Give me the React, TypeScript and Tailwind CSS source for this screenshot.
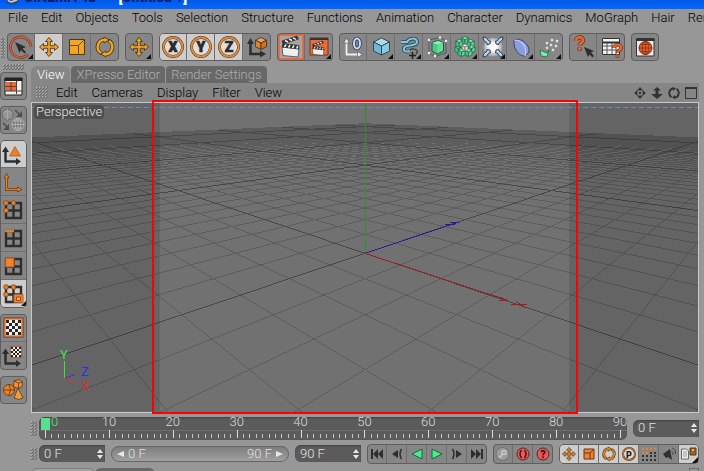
import React from "react";
import type { ReactNode } from "react";

const ORANGE = "#f4a324";
const DEEP = "#e8802a";
const DARK = "#2e2e2e";

/* ---------- shared pieces ---------- */

function Svg({ children, size = 28 }: { children: ReactNode; size?: number }) {
  return (
    <svg width={size} height={size} viewBox={`0 0 ${size} ${size}`} className="block shrink-0" aria-hidden="true">
      {children}
    </svg>
  );
}

const Corner = () => <path d="M26 21v5h-5z" fill="#111" />;

function Grip({ className }: { className: string }) {
  return (
    <div
      className={`shrink-0 bg-[linear-gradient(135deg,#b4b4b4_33%,#6a6a6a_34%,#6a6a6a_66%,#8e8e8e_67%)] bg-[length:3px_3px] ${className}`}
    />
  );
}

function MoveShape({ s = 1, fill = ORANGE }: { s?: number; fill?: string }) {
  return (
    <g transform={`scale(${s})`}>
      <path
        d="M0-9.5 3.5-5.500H1.300V-1.300H5.500V-3.500L9.500 0 5.500 3.500V1.300H1.300V5.500H3.500L0 9.500-3.500 5.500H-1.300V1.300H-5.500V3.500L-9.500 0-5.500-3.500V-1.300H-1.300V-5.500H-3.500Z"
        fill={fill}
        stroke="#4a3818"
        strokeWidth="0.9"
      />
    </g>
  );
}

type Shades = [string, string, string];

function Cube({ x, y, r, c, edge = DARK }: { x: number; y: number; r: number; c: Shades; edge?: string }) {
  const h = r / 2;
  return (
    <g transform={`translate(${x} ${y})`} stroke={edge} strokeWidth="0.8" strokeLinejoin="round">
      <path d={`M0 ${-r}L${r} ${-h}L0 0L${-r} ${-h}Z`} fill={c[0]} />
      <path d={`M${-r} ${-h}L0 0V${r + 1}L${-r} ${h + 1}Z`} fill={c[1]} />
      <path d={`M${r} ${-h}L0 0V${r + 1}L${r} ${h + 1}Z`} fill={c[2]} />
    </g>
  );
}

function Letter({ ch }: { ch: string }) {
  return (
    <Svg>
      <circle cx="14" cy="14" r="9.500" fill="#dedede" stroke="#4a3420" strokeWidth="2.800" />
      <circle cx="14" cy="14" r="9.500" fill="none" stroke="#e08a3c" strokeWidth="2" />
      <text x="14" y="19" textAnchor="middle" fontSize="14" fontWeight="900" fill="#2a2a2a" stroke="#2a2a2a" strokeWidth="0.700" fontFamily="Roboto, sans-serif">
        {ch}
      </text>
    </Svg>
  );
}

function RotateShape({ fill = ORANGE }: { fill?: string }) {
  return (
    <g fill="none">
      <g stroke="#4a3818" strokeWidth="4">
        <path d="M-3.500 6.500A7.300 7.300 0 0 1 0-7.300" />
        <path d="M3.500-6.500A7.300 7.300 0 0 1 0 7.300" />
      </g>
      <path d="M-1-10 4-7-1-4ZM1 10-4 7 1 4Z" fill={fill} stroke="#4a3818" strokeWidth="0.900" />
      <g stroke={fill} strokeWidth="2.400">
        <path d="M-4 6.100A7.300 7.300 0 0 1 0-7.300" />
        <path d="M4-6.100A7.300 7.300 0 0 1 0 7.300" />
      </g>
    </g>
  );
}

function Checker({ x, y, s, n = 5 }: { x: number; y: number; s: number; n?: number }) {
  const cells: ReactNode[] = [];
  for (let r = 0; r < n; r++)
    for (let c = 0; c < n; c++)
      cells.push(
        <rect key={`${r}-${c}`} x={x + c * s} y={y + r * s} width={s} height={s} fill={(r + c) % 2 ? "#f2f2f2" : "#262626"} />,
      );
  return <g shapeRendering="crispEdges">{cells}</g>;
}

const Clapper = () => (
  <g stroke="#333" strokeWidth="0.700">
    <path d="M5 14 22 16 21 24 6 22.500Z" fill="#f0f0f0" />
    <path d="M5 14 6 10.500 22 12.500 22 16Z" fill="#333" />
    <path d="M5 8 20 3 21.500 6 6 11Z" fill="#333" />
    <path d="M8 7.500l3 1.500M12 6l3 1.500M16 4.800l3 1.500M9 11.500l-1.500 2.500M13 12l-1.500 2.500M17 12.500l-1.500 2.500M21 13l-1.500 2.500" stroke="#eee" strokeWidth="1.500" />
  </g>
);

type Tool = { label: string; icon: ReactNode; on?: boolean };

function ToolGroup({ tools }: { tools: Tool[] }) {
  return (
    <div className="flex shrink-0 overflow-hidden rounded outline-1 -outline-offset-1 outline-[#5e5e5e]">
      {tools.map((t, i) => (
        <button
          key={t.label}
          type="button"
          aria-label={t.label}
          className={`flex h-7 w-7 ${t.on ? "bg-[#cdcdcd]" : "bg-[#868686]"} ${i < tools.length - 1 ? "border-r border-[#6e6e6e]" : ""}`}
        >
          {t.icon}
        </button>
      ))}
    </div>
  );
}

function SideGroup({ tools }: { tools: Tool[] }) {
  return (
    <div className="w-[27px] overflow-hidden rounded outline-1 -outline-offset-1 outline-[#5e5e5e]">
      {tools.map((t, i) => (
        <button
          key={t.label}
          type="button"
          aria-label={t.label}
          className={`flex h-7 w-full ${t.on ? "bg-[#cdcdcd]" : "bg-[#868686]"} ${i < tools.length - 1 ? "border-b border-[#6e6e6e]" : ""}`}
        >
          {t.icon}
        </button>
      ))}
    </div>
  );
}

/* ---------- main toolbar ---------- */

const ICE: Shades = ["#a8dcf0", "#6cb8dc", "#84cce8"];
const MINT: Shades = ["#86e8b0", "#48c486", "#5cd898"];
const AMBER: Shades = ["#f4a050", "#e8802a", "#d8701c"];

const toolbar: Tool[][] = [
  [
    {
      label: "Live Selection",
      icon: (
        <Svg>
          <path d="M21 21.500A10.300 10.300 0 1 1 24 14" fill="none" stroke="#5c3428" strokeWidth="2.600" />
          <path d="M21 21.500A10.300 10.300 0 1 1 24 14" fill="none" stroke="#d4603c" strokeWidth="1.600" />
          <path d="M8 9 19 14 15.500 15.500 19 19 17.500 20.500 14 17 12.500 20Z" fill={DARK} />
          <Corner />
        </Svg>
      ),
    },
    { label: "Move", on: true, icon: <Svg><g transform="translate(14 14)"><MoveShape /></g></Svg> },
    {
      label: "Scale",
      icon: (
        <Svg>
          <path d="M6.500 6.500h15v15h-15Z" fill={ORANGE} stroke="#4a3818" />
          <path d="M6.500 12.500h9v9M15.500 12.500l6-6" fill="none" stroke="#6a4a18" />
        </Svg>
      ),
    },
    { label: "Rotate", icon: <Svg><g transform="translate(14 14)"><RotateShape /></g></Svg> },
  ],
  [{ label: "Last Tool", icon: <Svg><g transform="translate(14 14)"><MoveShape /></g><Corner /></Svg> }],
  [
    { label: "Lock X", on: true, icon: <Letter ch="X" /> },
    { label: "Lock Y", on: true, icon: <Letter ch="Y" /> },
    { label: "Lock Z", on: true, icon: <Letter ch="Z" /> },
    {
      label: "Coordinate System",
      icon: (
        <Svg>
          <path d="M7.500 21V9M6 21H18" stroke={DARK} strokeWidth="2.500" />
          <path d="M7.500 5 11 11H4ZM23 21l-6-3.500v7Z" fill={DARK} />
          <Cube x={18} y={10} r={5.500} c={AMBER} />
        </Svg>
      ),
    },
  ],
  [
    {
      label: "Render View",
      icon: (
        <Svg>
          <path d="M2 2h24v24H2Z" fill="#a8a4a2" stroke="#f0622c" strokeWidth="1.500" />
          <Clapper />
        </Svg>
      ),
    },
    {
      label: "Render to Picture Viewer",
      icon: (
        <Svg>
          <path d="M5 5h18v17H5Z" fill="#ee6a34" stroke="#7a3418" />
          <path d="M5 6h18" stroke="#333" strokeWidth="2" />
          <g transform="translate(4 6) scale(.68)"><Clapper /></g>
          <Corner />
        </Svg>
      ),
    },
  ],
  [
    {
      label: "Null Object",
      icon: (
        <Svg>
          <path d="M7.500 21.500V8M7 21.500H20" stroke="#f0f0f0" strokeWidth="1.800" fill="none" />
          <path d="M7.500 5l3 5h-6ZM23.500 21.500l-5-3v6Z" fill="#f0f0f0" stroke="#444" strokeWidth="0.600" />
          <ellipse cx="18" cy="10.500" rx="3" ry="5" fill="none" stroke="#34405c" strokeWidth="3.600" />
          <ellipse cx="18" cy="10.500" rx="3" ry="5" fill="none" stroke="#c4dcf4" strokeWidth="2" />
        </Svg>
      ),
    },
    { label: "Cube", icon: <Svg><Cube x={14.500} y={13} r={8} c={ICE} /><Corner /></Svg> },
    {
      label: "Spline",
      icon: (
        <Svg>
          <path d="M10 18c4 2 5-3 9-2s4 3 2 5" fill="none" stroke="#2c343c" strokeWidth="1.200" />
          <path d="M6 9h6c2-4 10-5 10 0s-12 2-13 6 4 4 6 3" fill="none" stroke="#2c4450" strokeWidth="3.600" />
          <path d="M6 9h6c2-4 10-5 10 0s-12 2-13 6 4 4 6 3" fill="none" stroke="#7cc8e8" strokeWidth="2" />
          <path d="M14 22.500h7M17.500 19v7" stroke="#222" strokeWidth="1.600" />
          <Corner />
        </Svg>
      ),
    },
    {
      label: "HyperNURBS",
      icon: (
        <Svg>
          <path d="M6 7 17 4.500 23 8V20L12 23.500 6 20Z" fill="none" stroke="#555" strokeWidth="0.900" />
          <path d="M9 9.500 15 7.500 20.500 9.500V18L14 21 9 18Z" fill="#4cc888" stroke="#205c3c" strokeLinejoin="round" />
          <path d="M9.500 9.800 15 8 20 9.800 14.500 11.500Z" fill="#90f0b8" />
          <path d="M14.500 11.500 20 9.800V17.500L14.200 20.500Z" fill="#64dc9c" />
          <g fill="#f2f2f2"><circle cx="6" cy="7" r="1.200" /><circle cx="17" cy="4.500" r="1.200" /><circle cx="23" cy="8" r="1.200" /><circle cx="6" cy="20" r="1.200" /><circle cx="12" cy="23" r="1.200" /></g>
          <Corner />
        </Svg>
      ),
    },
    {
      label: "Array",
      icon: (
        <Svg>
          {[-90, -35, 20, 160, 215, 60, 120].map((a) => (
            <Cube key={a} x={14 + 7 * Math.cos((a * Math.PI) / 180)} y={13.500 + 6.500 * Math.sin((a * Math.PI) / 180)} r={3.500} c={MINT} edge="#286848" />
          ))}
          <Cube x={14} y={14} r={3} c={["#fff", "#ccc", "#e0e0e0"]} edge="#777" />
          <Corner />
        </Svg>
      ),
    },
    {
      label: "Deformer",
      icon: (
        <Svg>
          <circle cx="14" cy="14" r="9.500" fill="#a8a8a8" />
          <circle cx="14" cy="14" r="8" fill="#cacaca" />
          <circle cx="14" cy="14" r="6" fill="#ececec" />
          <circle cx="14" cy="14" r="4" fill="#fff" />
          {[0, 90, 180, 270].map((a) => (
            <path key={a} transform={`rotate(${a} 14 14)`} d="M4 4 7 4.500 10 8 11.500 8 11 11 8 11.500 8 10 4.500 7Z" fill="#b4d0ec" stroke="#2c3440" strokeWidth="0.900" />
          ))}
          <Corner />
        </Svg>
      ),
    },
    {
      label: "Bend",
      icon: (
        <Svg>
          <path d="M7 7C12 4 23 10 22 19L18 23C14 24 6 18 7 7Z" fill="#8c9ce0" stroke="#343c70" strokeWidth="0.900" />
          <path d="M7 7C14 7 21 13 18 23" fill="none" stroke="#c4ccfa" strokeWidth="1.200" />
          <Corner />
        </Svg>
      ),
    },
    {
      label: "Particles",
      icon: (
        <Svg>
          <path d="M5 17 12 20 14 17 12 24 6 23Z" fill="#84e8ac" stroke="#2c7850" />
          <g fill="#f4f4f4" stroke="#777" strokeWidth=".4">
            <circle cx="12" cy="10" r="1.500" /><circle cx="17" cy="7" r="1.500" /><circle cx="22" cy="8" r="1.500" /><circle cx="16" cy="12" r="1.500" /><circle cx="21" cy="13" r="1.500" /><circle cx="12" cy="15" r="1.400" /><circle cx="18" cy="17" r="1.400" />
          </g>
          <Corner />
        </Svg>
      ),
    },
  ],
  [
    {
      label: "Help",
      icon: (
        <Svg>
          <path d="M7 8C7 3 14 3 14 7.500 14 10 10.500 10 10.500 12.500M10.500 14.500v3" fill="none" stroke="#4a241a" strokeWidth="4" />
          <path d="M7 8C7 3 14 3 14 7.500 14 10 10.500 10 10.500 12.500M10.500 14.500v2.500" fill="none" stroke="#f0642c" strokeWidth="2.800" />
          <path d="M15 14 25 18 22 19.500 25 23 23.500 24.500 20.500 21.500 19 24Z" fill={DARK} />
        </Svg>
      ),
    },
    {
      label: "Table Help",
      icon: (
        <Svg>
          <path d="M5.500 5.500h17v16h-17Z" fill="#f2f2f2" stroke="#333" />
          <path d="M5 9.500h18" stroke="#333" strokeWidth="2" />
          <path d="M6 13h16M6 17h16M10 10v11M15 10v11M19 10v11" stroke="#555" />
          <path d="M17 15c0-4 7-4 7 0 0 2.500-3.500 2-3.500 5M20.500 21.500v3" fill="none" stroke="#4a241a" strokeWidth="3.600" />
          <path d="M17 15c0-4 7-4 7 0 0 2.500-3.500 2-3.500 5M20.500 21.500v2.500" fill="none" stroke="#f0642c" strokeWidth="2.400" />
        </Svg>
      ),
    },
  ],
  [
    {
      label: "Online",
      icon: (
        <Svg>
          <path d="M5.500 5.500h17.500v17.500H5.500Z" fill="#eee" stroke="#333" />
          <path d="M5 7h18.500" stroke="#333" strokeWidth="2" />
          <circle cx="14.500" cy="15" r="6.500" fill="#ea5a24" stroke="#74301a" />
          <path d="M8 15h13M14.500 8.500v13M9.500 11.500h10M9.500 18.500h10" stroke="#74301a" strokeWidth="0.700" />
          <ellipse cx="14.500" cy="15" rx="3.300" ry="6.500" fill="none" stroke="#74301a" strokeWidth="0.700" />
        </Svg>
      ),
    },
  ],
];

/* ---------- mode palette ---------- */

const Grid4 = () => <path d="M6 7h15v15H6Z M13.500 7v15M6 14.500h15" fill="none" stroke={DARK} strokeWidth="2.400" />;

const Dots = () => (
  <g fill={DEEP} stroke="#6a3410" strokeWidth="0.600">
    <circle cx="6" cy="7" r="2.400" />
    <circle cx="13.500" cy="7" r="2.400" />
    <circle cx="6" cy="14.500" r="2.400" />
  </g>
);

const palette: Tool[][] = [
  [
    {
      label: "Layout",
      icon: (
        <Svg>
          <path d="M5 6h17v17H5Z" fill="#eee" stroke="#222" />
          <path d="M4.500 7.500h18" stroke="#222" strokeWidth="3" />
          <path d="M6 10h10v9H6Z" fill="#ee6a34" />
          <path d="M11 10v9M16.500 9v13M5 14.500h11M5 19h17" stroke="#444" />
        </Svg>
      ),
    },
  ],
  [
    {
      label: "Make Editable",
      icon: (
        <Svg>
          <g fill="none" stroke="#b4b4b4">
            <circle cx="7.500" cy="8.500" r="5.500" fill="#949494" stroke="#666" />
            <path d="M3 7q4.500-4 9 0M7.500 3v11" stroke="#a8a8a8" />
            <circle cx="18" cy="18.500" r="6" fill="#747474" />
            <path d="M12 18.500h12M18 12.500v12M13.500 15h9M13.500 22h9" />
            <ellipse cx="18" cy="18.500" rx="3" ry="6" />
          </g>
          <path d="M15 4l5 5M3 17l5 5" stroke="#505050" strokeWidth="1.600" />
          <path d="M22 11V5l-6 6ZM9 24v-6l-6 6Z" fill="#505050" />
        </Svg>
      ),
    },
  ],
  [
    {
      label: "Model",
      on: true,
      icon: (
        <Svg>
          <path d="M5.500 21V10M4.500 21.500H17" stroke={DARK} strokeWidth="2.500" />
          <path d="M5.500 6.500 9 12H2ZM21 21.500l-5-3.500v7Z" fill={DARK} />
          <path d="M15 6.500 20.500 16H9.500Z" fill={DEEP} stroke="#a85414" strokeWidth="0.700" />
        </Svg>
      ),
    },
    {
      label: "Object Axis",
      icon: (
        <Svg>
          <path d="M6.500 9v12.500H19" fill="none" stroke="#5c3820" strokeWidth="3" />
          <path d="M6.500 5.500 9 10H4ZM22 21.500 17.500 19v5Z" fill={DEEP} stroke="#5c3820" strokeWidth="0.800" />
          <path d="M6.500 9v12.500H19" fill="none" stroke={DEEP} strokeWidth="1.600" />
        </Svg>
      ),
    },
    { label: "Points", icon: <Svg><Grid4 /><Dots /></Svg> },
    { label: "Edges", icon: <Svg><Grid4 /><path d="M5 7h9" stroke={DEEP} strokeWidth="2.500" /></Svg> },
    { label: "Polygons", icon: <Svg><Grid4 /><path d="M5.500 6h8.500v9H5.500Z" fill="#ee8430" stroke="#a85414" /></Svg> },
    {
      label: "Auto Mode",
      on: true,
      icon: (
        <Svg>
          <Grid4 />
          <Dots />
          <path d="M14 14.500h9v8h-9Z" fill="#ee8430" stroke="#c05a1c" />
          <path d="M16.500 17h4v3.500h-4Z" fill="#f8b07c" stroke="#a04814" />
          <Corner />
        </Svg>
      ),
    },
  ],
  [
    {
      label: "Texture",
      icon: (
        <Svg>
          <path d="M5 5h17v17H5Z" fill="#f0f0f0" stroke="#5c3420" strokeWidth="3" />
          <path d="M5 5h17v17H5Z" fill="#f0f0f0" stroke="#e8783c" strokeWidth="1.600" />
          <Checker x={6} y={6} s={3} />
        </Svg>
      ),
    },
    {
      label: "Texture Axis",
      icon: (
        <Svg>
          <path d="M5.500 21V10M4.500 21.500H17" stroke={DARK} strokeWidth="2.500" />
          <path d="M5.500 6.500 9 12H2ZM21 21.500l-5-3.500v7Z" fill={DARK} />
          <path d="M10.500 4.500h11v11h-11Z" fill="#eee" stroke="#a85c38" />
          <Checker x={11} y={5} s={2} />
        </Svg>
      ),
    },
  ],
  [
    {
      label: "Objects",
      icon: (
        <Svg>
          <g stroke="#5c3410" strokeWidth="0.800">
            <circle cx="9" cy="14" r="5.500" fill="#ec8424" />
            <path d="M3.500 14h11M9 8.500q3 5 0 11" fill="none" />
            <path d="M14 5 19 3.500 22.500 6 22 11 18 12.500 13.500 10.500Z" fill="#f09038" />
            <path d="M14 5l4.500 2 4-1M18.500 7v5" fill="none" />
            <path d="M18 12 23 22q-4 3-9 0Z" fill="#f09a40" />
          </g>
        </Svg>
      ),
    },
  ],
];

/* ---------- viewport ---------- */

const CX = 333.5;
const HORIZON = 2;
const DEPTH = 0.0733;
const EXTENT = 47;

function project(p: number, q: number): [number, number] {
  const w = 1 - DEPTH * (p + q);
  return [CX + (32.4 * (p - q)) / w, HORIZON + 148.5 / w];
}

function gridPath(major: boolean): string {
  let d = "";
  for (let c = -EXTENT; c <= EXTENT; c++) {
    if ((c % 10 === 0) !== major) continue;
    // Stop each line before it passes behind the camera.
    const end = Math.min(EXTENT, 0.85 / DEPTH - c);
    if (end <= -EXTENT) continue;
    const a = project(c, -EXTENT);
    const b = project(c, end);
    const m = project(-EXTENT, c);
    const n = project(end, c);
    d += `M${a[0].toFixed(1)} ${a[1].toFixed(1)}L${b[0].toFixed(1)} ${b[1].toFixed(1)}`;
    d += `M${m[0].toFixed(1)} ${m[1].toFixed(1)}L${n[0].toFixed(1)} ${n[1].toFixed(1)}`;
  }
  return d;
}

function Viewport() {
  return (
    <div className="relative border border-[#c9c9c9] bg-[#717171]">
      <svg viewBox="0 0 667 309" className="block h-auto w-full" role="img" aria-label="Perspective grid">
        <g shapeRendering="crispEdges" fill="none">
          <path d={gridPath(false)} stroke="#5d5d5d" />
          <path d={gridPath(true)} stroke="#484848" />
          <path d="M333.500 0V150" stroke="#2b912b" />
          <path d="M333.500 150.500 427 119.500M414 121.500h10M419 119.500h9" stroke="#20209c" />
          <path d="M333.500 150.500 476 197.500M468 198h9M470 195l6 3M480 201.500h16M485 199l9 6" stroke="#a11c1c" />
        </g>
        <path d="M0 0h128v309H0ZM538 0h129v309H538Z" fill="#000" fillOpacity=".11" />
        <path d="M0 4.500h667" stroke="#6d8cae" strokeDasharray="5 3" />
        <g shapeRendering="crispEdges" strokeWidth="1">
          <path d="M32.500 276V258" stroke="#3ce03c" />
          <path d="M32.500 275.500l11-3.500" stroke="#3434e0" />
          <path d="M32.500 275.500l11 4.500" stroke="#e03434" />
        </g>
        <g fontFamily="Roboto, sans-serif" fontSize="13" fontWeight="400">
          <text x="28" y="256" fill="#44e044">Y</text>
          <text x="49" y="273" fill="#3030e0">Z</text>
          <text x="49" y="287" fill="#d83030">X</text>
        </g>
      </svg>
      <span className="absolute top-0.5 left-0.5 rounded-sm bg-[#4d4d4d] px-0.5 text-[13px] leading-[14px] text-[#e4e4e4]">
        Perspective
      </span>
      <div className="absolute -top-[3px] -bottom-0.5 left-[18%] w-[64%] border-2 border-[#ff0000]" />
    </div>
  );
}

/* ---------- timeline ---------- */

const frames = Array.from({ length: 91 }, (_, i) => i);

// Minor ticks fall ten to a labelled interval.
function Ruler() {
  return (
    <div className="relative h-[23px] flex-1 overflow-hidden rounded-md bg-[#5b5b5b] shadow-[inset_0_1px_2px_#404040]">
      <div className="absolute top-px left-0.5 h-[13px] w-[9px] bg-[#58e08c]" />
      <div className="absolute inset-x-0 top-[13px] h-px bg-[#6c6c6c]" />
      <div className="absolute inset-y-0 right-[7px] left-1.5">
        {frames.map((t) => (
          <div
            key={t}
            className={`absolute bottom-0.5 w-px ${t % 10 === 0 ? "h-2 bg-[#dadada]" : "h-1 bg-[#c4c4c4]"}`}
            style={{ left: `${t / 0.9}%` }}
          />
        ))}
        {frames.filter((t) => t % 10 === 0).map((t) => (
          <span
            key={t}
            className={`absolute -top-0.5 text-[13px] leading-[14px] ${t === 0 ? "ml-1.5 text-[#58e08c]" : "-translate-x-1/2 text-[#dadada]"}`}
            style={{ left: `${t / 0.9}%` }}
          >
            {t}
          </span>
        ))}
      </div>
    </div>
  );
}

function FrameField({ label, value }: { label: string; value: string }) {
  return (
    <div className="flex h-[17px] w-[66px] shrink-0 items-center rounded-l-md bg-[#5b5b5b] pr-0.5 pl-[5px] shadow-[inset_0_1px_2px_#404040]">
      <input aria-label={label} defaultValue={value} className="h-4 w-12 min-w-0 flex-1 bg-transparent text-[13px] text-[#e4e4e4] outline-none" />
      <button type="button" aria-label={`${label} stepper`}>
        <svg width="6" height="10" viewBox="0 0 6 10" aria-hidden="true">
          <path d="M3 0l3 4H0ZM3 10l3-4H0Z" fill="#e8e8e8" />
        </svg>
      </button>
    </div>
  );
}

const rewind = (
  <g fill={DARK}>
    <path d="M4 5h2v10H4Z" />
    <path d="M11 5v10L6 10ZM16 5v10l-5-5Z" />
  </g>
);

const transport: Tool[][] = [
  [
    { label: "Go to Start", icon: <Svg size={20}>{rewind}</Svg> },
    { label: "Previous Key", icon: <Svg size={20}><path d="M11 6v8l-6-4Z" fill={DARK} /><path d="M14.500 5q-3 5 0 10" fill="none" stroke={DARK} strokeWidth="1.500" /></Svg> },
    { label: "Play Backwards", icon: <Svg size={20}><path d="M15 5v10L5 10Z" fill="#44f088" stroke="#245c38" /></Svg> },
    { label: "Play Forwards", icon: <Svg size={20}><path d="M5 5v10l10-5Z" fill="#44f088" stroke="#245c38" /></Svg> },
    { label: "Next Key", icon: <Svg size={20}><path d="M9 6v8l6-4Z" fill={DARK} /><path d="M5.500 5q3 5 0 10" fill="none" stroke={DARK} strokeWidth="1.500" /></Svg> },
    { label: "Go to End", icon: <Svg size={20}><g transform="matrix(-1 0 0 1 20 0)">{rewind}</g></Svg> },
  ],
  [
    { label: "Record", icon: <Svg size={20}><circle cx="9.500" cy="10" r="6.500" fill="#9c9c9c" stroke="#707070" /><circle cx="11" cy="8.500" r="2" fill="none" stroke="#c8c8c8" strokeWidth="1.500" /><path d="M9.500 10 6 13.500M7 12l1.500 1.500" stroke="#c8c8c8" strokeWidth="1.500" /></Svg> },
    { label: "Autokeying", icon: <Svg size={20}><circle cx="10" cy="10" r="6" fill="#f05858" stroke="#5c2424" /><path d="M8.500 6q-3 4 0 8M11.500 6q3 4 0 8" fill="none" stroke="#401818" strokeWidth="1.500" /></Svg> },
    { label: "Key Help", icon: <Svg size={20}><circle cx="10" cy="10" r="6" fill="#f05858" stroke="#5c2424" /><text x="10" y="14" textAnchor="middle" fontSize="11" fontWeight="900" fill="#301010" fontFamily="Roboto, sans-serif">?</text></Svg> },
  ],
  [
    { label: "Key Position", on: true, icon: <Svg size={20}><g transform="translate(10 10)"><MoveShape s={0.7} fill={DEEP} /></g></Svg> },
    { label: "Key Scale", on: true, icon: <Svg size={20}><path d="M5 5h10v10H5Z" fill="#ee8430" stroke="#6a3410" /><path d="M5 9h6v6M11 9l4-4" fill="none" stroke="#6a3410" /></Svg> },
    { label: "Key Rotation", on: true, icon: <Svg size={20}><g transform="translate(10 10) scale(.7)"><RotateShape fill={DEEP} /></g></Svg> },
    { label: "Key Parameters", on: true, icon: <Svg size={20}><circle cx="10" cy="10" r="6" fill="#ddd" stroke="#5c3820" strokeWidth="2" /><circle cx="10" cy="10" r="6" fill="none" stroke="#de8438" /><text x="10" y="13.500" textAnchor="middle" fontSize="9" fontWeight="900" fill="#222" fontFamily="Roboto, sans-serif">P</text></Svg> },
    {
      label: "Key PLA",
      icon: (
        <Svg size={20}>
          {[4, 8, 12, 16].map((x) => [5, 9, 12, 16].map((y) => <rect key={`${x}-${y}`} x={x - 1} y={y - 1} width="2" height="2" fill={y < 7 || (x < 10 && y < 10) ? DEEP : "#333"} />))}
        </Svg>
      ),
    },
    { label: "Sound", icon: <Svg size={20}><path d="M4 10 11 5 13 16 9 13 7 14Z" fill={DARK} /><path d="M12.500 7q2 1 1.500 4M13 4q4 1 3.500 6" fill="none" stroke="#444" /></Svg> },
    { label: "Options", on: true, icon: <Svg size={20}><path d="M2.500 5h5l2 2v8h-7Z" fill="#eee" stroke="#666" /><path d="M4 8h4M4 10h4M4 12h4" stroke="#999" /><path d="M11 4h6v7h-6Z" fill="#9a6428" stroke="#503818" /><path d="M13 5h2v2h-2Z" fill="#e8b060" /><path d="M19 13v6h-6Z" fill="#111" /></Svg> },
  ],
];

function TransportGroup({ tools }: { tools: Tool[] }) {
  return (
    <div className="flex shrink-0 overflow-hidden rounded outline-1 -outline-offset-1 outline-[#5e5e5e]">
      {tools.map((t, i) => (
        <button
          key={t.label}
          type="button"
          aria-label={t.label}
          className={`flex h-5 w-5 ${t.on ? "bg-[#cdcdcd]" : "bg-[#868686]"} ${i < tools.length - 1 ? "border-r border-[#6e6e6e]" : ""}`}
        >
          {t.icon}
        </button>
      ))}
    </div>
  );
}

/* ---------- page ---------- */

const menus = ["File", "Edit", "Objects", "Tools", "Selection", "Structure", "Functions", "Animation", "Character", "Dynamics", "MoGraph", "Hair", "Render"];
const viewMenus = ["Edit", "Cameras", "Display", "Filter", "View"];

export default function App() {
  return (
    <div className="h-screen overflow-hidden bg-[#979797] font-[Roboto,'Liberation_Sans',sans-serif] text-[13px] font-light text-black">
      <header className="flex h-[9px] items-end gap-1 overflow-hidden bg-linear-to-b from-[#0058e6] to-[#0468ff] px-1.5">
        <svg width="14" height="9" viewBox="0 0 14 9" className="shrink-0 self-start" aria-hidden="true">
          <path d="M0 0q1 4 6 5 6 0 7-5Z" fill="#2c4880" />
          <path d="M2 0q2 3 6 1l3-1" stroke="#c8d4e8" strokeWidth="1.500" fill="none" />
        </svg>
        <h1 className="mb-1 flex gap-3 text-sm leading-4 font-bold whitespace-nowrap text-[#001c70]">
          <span>CINEMA 4D -</span>
          <span><b className="text-white">[</b>Untitled 1<b className="text-white">]</b></span>
        </h1>
      </header>

      <nav className="flex h-6 gap-[13px] overflow-hidden pt-px pl-2 leading-4 whitespace-nowrap">
        {menus.map((m) => (
          <button key={m} type="button" className="h-4 shrink-0">{m}</button>
        ))}
      </nav>

      <div className="flex items-center gap-0.5 pl-px">
        <Grip className="h-[21px] w-1" />
        <div className="flex gap-1.5">
          {toolbar.map((g, i) => <ToolGroup key={i} tools={g} />)}
        </div>
      </div>

      <div className="flex gap-1">
        <aside className="flex w-[27px] shrink-0 flex-col gap-1.5 pt-[3px]">
          <Grip className="-mb-1 ml-[3px] h-1.5 w-[21px]" />
          {palette.map((g, i) => <SideGroup key={i} tools={g} />)}
        </aside>

        <main className="min-w-0 flex-1 pt-[5px] pr-[5px]">
          <div className="flex gap-px leading-[17px]" role="tablist">
            <button type="button" role="tab" aria-selected="true" className="rounded-t-md bg-[#868686] px-1.5 text-white">View</button>
            <button type="button" role="tab" aria-selected="false" className="rounded-t-sm bg-[#686868] px-[5px] text-[#b0b0b0]">XPresso Editor</button>
            <button type="button" role="tab" aria-selected="false" className="rounded-t-sm bg-[#686868] px-[5px] text-[#b0b0b0]">Render Settings</button>
          </div>
          <div className="flex h-[19px] items-center gap-3.5 bg-[#868686] pr-0.5 pl-[5px]">
            <Grip className="-mr-1.5 h-3 w-3" />
            {viewMenus.map((m) => (
              <button key={m} type="button" className="leading-4">{m}</button>
            ))}
            <div className="ml-auto flex items-center gap-[5px] text-[#333]">
              <button type="button" aria-label="Pan view">
                <svg width="12" height="12" viewBox="0 0 12 12" className="block"><path d="M6 0l3 3.500H3ZM6 12l3-3.500H3ZM0 6l3.500-3v6ZM12 6 8.500 3v6Z" fill="currentColor" /><path d="M5 5h2v2H5Z" fill="currentColor" /></svg>
              </button>
              <button type="button" aria-label="Zoom view">
                <svg width="12" height="12" viewBox="0 0 12 12" className="block"><path d="M6 0l4 3.500H7.500V7H12L6 12 0 7H4.500V3.500H2Z" fill="currentColor" /></svg>
              </button>
              <button type="button" aria-label="Rotate view">
                <svg width="12" height="12" viewBox="0 0 12 12" className="block"><path d="M3.500 10.300A5 5 0 0 1 5.500 1.200M8.500 1.700A5 5 0 0 1 6.500 10.800" fill="none" stroke="currentColor" strokeWidth="1.900" /><path d="M5 0v4l3-2.500ZM7 12V8l-3 2.500Z" fill="currentColor" /></svg>
              </button>
              <button type="button" aria-label="Maximize view">
                <svg width="12" height="12" viewBox="0 0 12 12" className="block"><path d="M.5 1.500h11v10H.5Z" fill="none" stroke="currentColor" /><path d="M0 1h12" stroke="currentColor" strokeWidth="2" /></svg>
              </button>
            </div>
          </div>

          <Viewport />

          <div className="mt-1 flex items-center gap-1.5">
            <Grip className="-mr-1 h-[15px] w-1.5" />
            <Ruler />
            <FrameField label="Current frame" value="0 F" />
          </div>

          <div className="mt-1 flex items-center gap-1.5">
            <Grip className="-mr-1 h-3 w-1.5" />
            <FrameField label="Start frame" value="0 F" />
            <div className="flex h-4 min-w-0 flex-1 items-center gap-1 rounded-full bg-linear-to-b from-[#7c7c7c] to-[#a2a2a2] px-1.5 text-[13px] text-[#e0e0e0] outline-1 -outline-offset-1 outline-[#666]">
              <svg width="7" height="8" viewBox="0 0 7 8" aria-hidden="true"><path d="M7 1v6L0 4Z" fill="#e8e8e8" /></svg>
              <span>0 F</span>
              <span className="ml-auto">90 F</span>
              <svg width="7" height="8" viewBox="0 0 7 8" aria-hidden="true"><path d="M0 1v6l7-3Z" fill="#e8e8e8" /></svg>
            </div>
            <FrameField label="End frame" value="90 F" />
            {transport.map((g, i) => <TransportGroup key={i} tools={g} />)}
          </div>

          <div className="mt-1 flex">
            <div className="h-4 w-16 rounded-t-md border border-[#7c7c7c] bg-[#a2a2a2]" />
            <div className="h-4 w-[60px] rounded-t-md bg-[#686868]" />
            <div className="ml-auto h-4 w-2.5 border border-[#6c6c6c]" />
          </div>
        </main>
      </div>
    </div>
  );
}
